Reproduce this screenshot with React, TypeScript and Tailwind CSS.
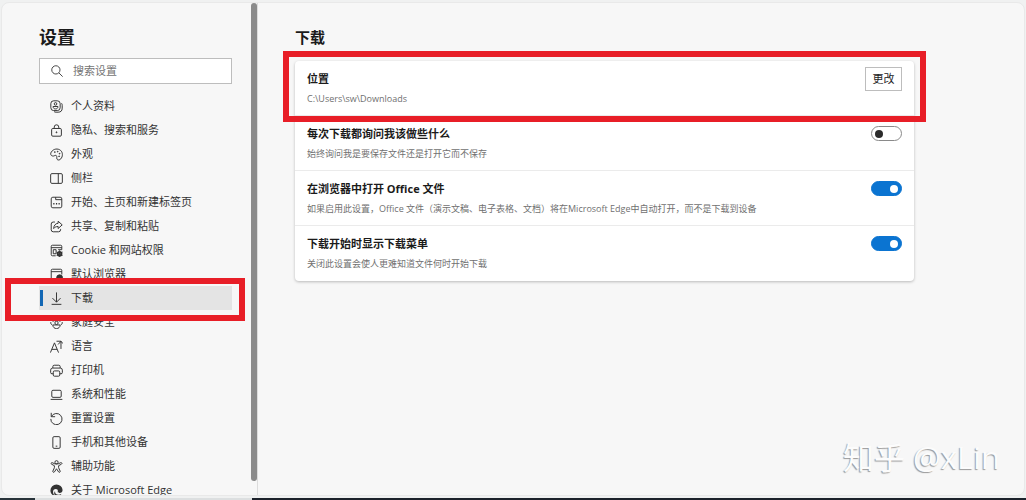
import React, { useState } from 'react';

const icons = {
  profile: (
    <>
      <rect x="1" y="1" width="11.500" height="12" rx="3.500" />
      <circle cx="6.800" cy="4.800" r="1.600" />
      <path d="M3.800 8h6c0 2-1.300 3-3 3s-3-1-3-3Z" />
      <path d="M14.200 4c.6.8.8 1.600.8 2.500V10a5 5 0 0 1-5 5H7.500c-1 0-1.800-.2-2.500-.7" />
    </>
  ),
  lock: (
    <>
      <rect x="2" y="5.500" width="12" height="9.500" rx="1.500" />
      <path d="M5.200 5.500V3.800a2.800 2.800 0 0 1 5.600 0v1.700" />
      <circle cx="8" cy="10.200" r=".6" fill="currentColor" />
    </>
  ),
  palette: (
    <>
      <path d="M2.800 3.500C6 .3 11.500.6 14 4c2.300 3.300 1.300 8.200-1.800 10.300-1.900 1.200-3.900.2-3.900-1.900 0-1.300.3-2.300-.5-3-1-.9-2.200.3-3.700.5C1 10-.7 7 2.800 3.500Z" />
      <circle cx="6" cy="5" r=".5" fill="currentColor" />
      <circle cx="9.500" cy="4.500" r=".5" fill="currentColor" />
      <circle cx="11.800" cy="7" r=".5" fill="currentColor" />
      <circle cx="11.200" cy="10.200" r=".5" fill="currentColor" />
    </>
  ),
  sidebar: (
    <>
      <rect x=".8" y="2" width="14.400" height="12" rx="1.500" />
      <path d="M10.200 2v12" />
    </>
  ),
  start: (
    <>
      <rect x="1.500" y="1.500" width="13" height="13" rx="2" />
      <path d="M7 1.500v3h7.500" />
      <path d="M4 9.500h1.500M7.300 9.500h1.500M10.500 9.500H12" strokeWidth="1.800" />
    </>
  ),
  share: (
    <>
      <path d="M6 2.500H4A2.500 2.500 0 0 0 1.500 5v7A2.500 2.500 0 0 0 4 14.500h6.500A2.500 2.500 0 0 0 13 12v-1" />
      <path d="M10 1.500 15 6l-5 4.500V8C7.500 8 6 8.700 4.500 10.500 4.700 7 6.500 4.300 10 4Z" />
    </>
  ),
  cookie: (
    <>
      <path d="M7 14.500H3A1.500 1.500 0 0 1 1.500 13V3A1.500 1.500 0 0 1 3 1.500h10A1.500 1.500 0 0 1 14.500 3v4M1.500 4.500h13M4 7h3.500v5H4ZM10 7h4.500" />
      <circle cx="11.800" cy="12" r="2.400" strokeWidth="2.200" />
      <path d="M11.800 7.800v8.400M8.200 9.900l7.200 4.200M15.400 9.900l-7.200 4.200" />
    </>
  ),
  browser: (
    <>
      <path d="M7.500 14.500H3A1.500 1.500 0 0 1 1.500 13V3A1.500 1.500 0 0 1 3 1.500h10A1.500 1.500 0 0 1 14.500 3v5M1.500 4.500h13" />
      <circle cx="11.800" cy="12" r="3.600" fill="currentColor" />
    </>
  ),
  download: <path d="M8 .5v12M3 7.500l5 5 5-5M2 15.200h12" />,
  family: (
    <>
      <circle cx="4" cy="4" r="2.300" />
      <circle cx="12" cy="4" r="2.300" />
      <circle cx="8" cy="8.500" r="2" />
      <path d="M3.500 11c0 6 9 6 9 0ZM1 7.500c-.3 1.500.3 3 1.800 3.500M15 7.500c.3 1.500-.3 3-1.800 3.500" />
    </>
  ),
  language: (
    <>
      <path d="M.5 15.500 5.500 3.500l5 12M2.300 11.500h6.400" />
      <path d="M8 1.500h5.500v9.500M10 5.500l3.500-4 2.500 3" />
    </>
  ),
  printer: (
    <>
      <path d="M3.500 5V3.200A1.700 1.700 0 0 1 5.200 1.500h5.600a1.700 1.700 0 0 1 1.700 1.700V5M4 12H2.500A1.500 1.500 0 0 1 .8 10.500v-3A2.500 2.500 0 0 1 3.300 5h9.400a2.500 2.500 0 0 1 2.500 2.500v3a1.500 1.500 0 0 1-1.700 1.500H12" />
      <rect x="4" y="8.500" width="8" height="6.500" rx="1.500" />
    </>
  ),
  laptop: (
    <>
      <rect x="2.200" y="2.800" width="11.600" height="8.700" rx="1.500" />
      <path d="M.8 14h14.400" />
    </>
  ),
  reset: <path d="M1.500 1v4.800h4.800M1.800 5.500A6.900 6.900 0 1 1 1 8.500" />,
  phone: (
    <>
      <rect x="3.500" y=".8" width="9" height="14.400" rx="1.500" />
      <path d="M7 12.500h2" />
    </>
  ),
  accessibility: (
    <>
      <circle cx="8" cy="2.800" r="2" />
      <path d="M6 4.800 2.800 3.300C1.400 2.800.7 4.600 2 5.200L5.400 7v2.500l-1.900 4.200c-.5 1.400 1.400 2.100 2 .9L8 10.800l2.500 3.800c.6 1.200 2.500.5 2-.9l-1.900-4.200V7L14 5.200c1.300-.6.6-2.400-.8-1.900L10 4.800Z" />
    </>
  ),
  edge: (
    <>
      <path
        d="M8 .5a7.500 7.500 0 0 1 7.500 6.900c0 2.200-1.600 3.600-3.700 3.600-1.700 0-2.600-.6-2.400-1.300.7-1.200.3-3.500-2.200-3.500-3.500 0-4.500 4-2.300 7 .5.700 1.100 1.300 1.800 1.900C2.800 14.300.5 11.500.5 8A7.500 7.500 0 0 1 8 .5Z"
        fill="currentColor"
        stroke="none"
      />
      <path
        d="M6.300 8.700c-.6 3 2 5 5 4.400 1.300-.2 2.100-.6 3-1-1.300 2.100-3.600 3.400-5.800 3.400-3.300-.9-4.400-4.400-2.200-6.800Z"
        fill="currentColor"
        stroke="none"
      />
    </>
  ),
};

type IconName = keyof typeof icons;

const navItems: { icon: IconName; label: string }[] = [
  { icon: 'profile', label: '个人资料' },
  { icon: 'lock', label: '隐私、搜索和服务' },
  { icon: 'palette', label: '外观' },
  { icon: 'sidebar', label: '侧栏' },
  { icon: 'start', label: '开始、主页和新建标签页' },
  { icon: 'share', label: '共享、复制和粘贴' },
  { icon: 'cookie', label: 'Cookie 和网站权限' },
  { icon: 'browser', label: '默认浏览器' },
  { icon: 'download', label: '下载' },
  { icon: 'family', label: '家庭安全' },
  { icon: 'language', label: '语言' },
  { icon: 'printer', label: '打印机' },
  { icon: 'laptop', label: '系统和性能' },
  { icon: 'reset', label: '重置设置' },
  { icon: 'phone', label: '手机和其他设备' },
  { icon: 'accessibility', label: '辅助功能' },
  { icon: 'edge', label: '关于 Microsoft Edge' },
];

const toggles = [
  {
    id: 'ask',
    title: '每次下载都询问我该做些什么',
    text: '始终询问我是要保存文件还是打开它而不保存',
    on: false,
  },
  {
    id: 'office',
    title: '在浏览器中打开 Office 文件',
    text: '如果启用此设置，Office 文件（演示文稿、电子表格、文档）将在Microsoft Edge中自动打开，而不是下载到设备',
    on: true,
  },
  {
    id: 'menu',
    title: '下载开始时显示下载菜单',
    text: '关闭此设置会使人更难知道文件何时开始下载',
    on: true,
  },
];

const NavIcon = ({ name }: { name: IconName }) => (
  <svg viewBox="0 0 16 16" className="size-[13px] shrink-0" fill="none" stroke="currentColor" strokeWidth="1.2" strokeLinejoin="round">
    {icons[name]}
  </svg>
);

const Sidebar = () => (
  <aside className="w-[249px] shrink-0 overflow-hidden pt-[22px] pr-[19px] pl-[37px]">
    <h1 className="text-lg/6 font-bold">设置</h1>
    <label className="mt-[9px] mb-2.5 flex h-[26px] items-center gap-2.5 border border-[#bdbdbd] bg-white pl-[11px]">
      <svg viewBox="0 0 16 16" className="size-3 shrink-0" fill="none" stroke="#444" strokeWidth="1.3">
        <circle cx="6.500" cy="6.500" r="5.500" />
        <path d="m10.500 10.500 5 5" />
      </svg>
      <input
        type="search"
        aria-label="搜索设置"
        placeholder="搜索设置"
        className="w-full min-w-0 bg-transparent text-[11px]/4 outline-none placeholder:text-[#757575]"
      />
    </label>
    <nav>
      <ul>
        {navItems.map((item) => {
          const active = item.icon === 'download';
          return (
            <li key={item.icon} className="relative">
              <a
                href="#"
                aria-current={active ? 'page' : undefined}
                className={`flex h-6 items-center text-[11px]/4 whitespace-nowrap text-[#333] ${active ? 'bg-[#e4e4e4]' : ''}`}
              >
                <span className={`mr-[7px] ml-px h-4 w-[3px] ${active ? 'bg-[#1267b4]' : ''}`} />
                <NavIcon name={item.icon} />
                <span className="ml-2">{item.label}</span>
              </a>
              {/* Callout around the current page */}
              {active && (
                <span className="pointer-events-none absolute -top-2 -right-[13px] -bottom-[11px] -left-[34px] z-10 border-6 border-[#e81e27]" />
              )}
            </li>
          );
        })}
      </ul>
    </nav>
  </aside>
);

const Toggle = ({ id, on }: { id: string; on: boolean }) => {
  const [checked, setChecked] = useState(on);
  return (
    <input
      id={id}
      type="checkbox"
      role="switch"
      checked={checked}
      onChange={(e) => setChecked(e.target.checked)}
      className="flex h-[15px] w-[31px] shrink-0 appearance-none items-center rounded-full border border-[#8a8a8a] bg-white px-[3px] before:size-2 before:rounded-full before:bg-[#2b2b2b] checked:justify-end checked:border-[#0b74d1] checked:bg-[#0b74d1] checked:before:bg-white"
    />
  );
};

const Downloads = () => (
  <main className="relative min-w-0 flex-1 pt-[22px] pr-[110px] pl-[37px]">
    <h2 className="text-[15px]/6 font-bold">下载</h2>
    <div className="mt-3 divide-y divide-[#ebebeb] rounded-sm bg-white shadow-[0_1px_3px_rgba(0,0,0,0.25)]">
      <section className="relative flex h-[55px] justify-between px-3 pt-1.5">
        <div className="pt-1">
          <h3 className="text-[11px]/4 font-bold">位置</h3>
          <p className="mt-1 text-[9px]/4 text-[#707070]">C:\Users\sw\Downloads</p>
        </div>
        <button type="button" className="h-6 w-[37px] shrink-0 border border-[#bdbdbd] bg-white text-[11px]/4 text-[#222]">
          更改
        </button>
        {/* Callout around the folder row */}
        <span className="pointer-events-none absolute -top-2.5 -right-3 -bottom-[7px] -left-3 z-10 border-6 border-[#e81e27]" />
      </section>
      {toggles.map((row) => (
        <section key={row.id} className="flex h-[55px] justify-between px-3 pt-2.5">
          <div>
            <label htmlFor={row.id} className="block text-[11px]/4 font-bold">
              {row.title}
            </label>
            <p className="mt-1 text-[9px]/4 text-[#707070]">{row.text}</p>
          </div>
          <Toggle id={row.id} on={row.on} />
        </section>
      ))}
    </div>
    <p className="absolute right-6 bottom-[18px] text-[31px]/10 text-[#fcfcfc] [text-shadow:-1px_1px_1px_#999]">知乎 @xLin</p>
  </main>
);

const App: React.FC = () => (
  <div className="flex h-screen flex-col bg-[#f0f1f1] pt-0.5 font-['Open_Sans','Noto_Sans_CJK_SC',sans-serif] text-[#1b1b1b]">
    <div className="mx-px flex min-h-0 flex-1 overflow-hidden rounded-lg border border-[#e9e9e9] bg-[#f7f7f7]">
      <Sidebar />
      <div className="w-[7px] shrink-0 border-r border-[#dcdcdc] pb-3.5">
        <div className="h-full w-1.5 rounded-full bg-[#8b8b8b]" />
      </div>
      <Downloads />
    </div>
    <footer className="mt-0.5 flex h-0.5 shrink-0">
      <span className="w-[35px] bg-[#28333a]" />
      <span className="w-[217px] bg-[#dcdfe0]" />
      <span className="flex-1 bg-[#1c222b]" />
    </footer>
  </div>
);

export default App;
